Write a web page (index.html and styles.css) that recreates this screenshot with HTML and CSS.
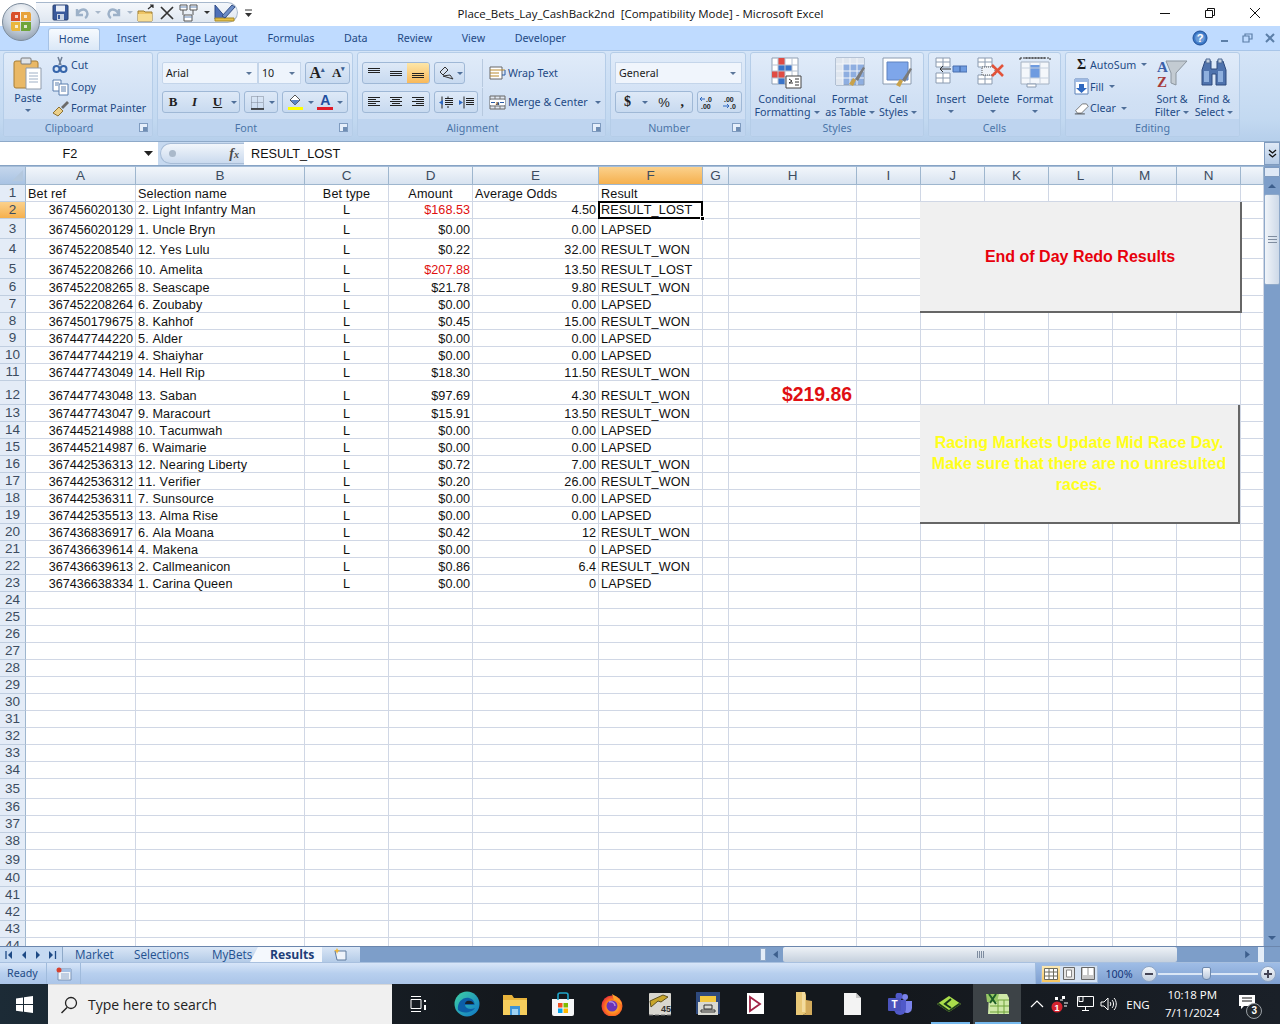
FILE: index.html
```html
<!DOCTYPE html>
<html lang="en">
<head>
<meta charset="utf-8">
<title>Place_Bets_Lay_CashBack2nd [Compatibility Mode] - Microsoft Excel</title>
<link rel="stylesheet" href="styles.css">
</head>
<body>
<div class="app">

<!-- Office orb -->
<div class="orb">
  <svg width="40" height="40" viewBox="0 0 40 40">
    <defs><radialGradient id="og" cx=".5" cy=".25" r=".8"><stop offset="0" stop-color="#fdfdfd"/><stop offset=".55" stop-color="#c9d3df"/><stop offset="1" stop-color="#8c9bab"/></radialGradient></defs>
    <circle cx="20" cy="20" r="18.5" fill="url(#og)" stroke="#7d8c9c"/>
    <path d="M11 10h8v9h-9v-7z" fill="#d9502a"/><path d="M20 10h9l1 2v7h-10z" fill="#e8a33a"/>
    <path d="M10 20h9v9h-8l-1-2z" fill="#e9b73e"/><path d="M20 20h10v7l-1 2h-9z" fill="#6fa53a"/>
    <path d="M14 13h3v3h-3zM23 13h3v3h-3zM14 23h3v3h-3zM23 23h3v3h-3z" fill="#fff" opacity=".75"/>
  </svg>
</div>

<!-- Title bar -->
<header class="titlebar">
  <div class="qat-wrap">
    <div class="qat">
      <svg width="17" height="17" viewBox="0 0 17 17"><rect x="1" y="1" width="15" height="15" rx="1" fill="#3a5a9c" stroke="#28406f"/><rect x="4" y="1.5" width="9" height="6" fill="#e9eef7"/><rect x="5" y="10" width="7" height="6" fill="#c9d3e3"/><rect x="6" y="11" width="2" height="4" fill="#3a5a9c"/></svg>
      <svg width="18" height="17" viewBox="0 0 18 17"><path d="M4 5v6h6M4 11C6 5 12 4 14 8c1 2 0 5-2 6" fill="none" stroke="#9db1c8" stroke-width="2.4"/></svg>
      <span class="mini-caret dim"></span>
      <svg width="18" height="17" viewBox="0 0 18 17"><path d="M14 5v6H8M14 11C12 5 6 4 4 8c-1 2 0 5 2 6" fill="none" stroke="#9db1c8" stroke-width="2.4"/></svg>
      <span class="mini-caret dim"></span>
      <svg width="18" height="18" viewBox="0 0 18 18"><path d="M1 7h6l1 1h7v9H1z" fill="#eec566" stroke="#9d7c2f"/><path d="M1 10h14v7H1z" fill="#f7dd93"/><path d="M11 5l5-4M13 1h3v3" fill="none" stroke="#2b2b2b" stroke-width="1.2"/></svg>
      <svg width="16" height="16" viewBox="0 0 16 16"><path d="M2 2l12 12M14 2L2 14" stroke="#333" stroke-width="1.7"/></svg>
      <svg width="21" height="18" viewBox="0 0 21 18"><path d="M1 1h7v5H1zM11 1h7v5h-7zM5 11h8v6H5z" fill="#fff" stroke="#555"/><path d="M1 3h7M11 3h7M5 13h8" stroke="#6788b8"/><path d="M4 6v5M14 6v5" stroke="#555"/></svg>
      <span class="mini-caret"></span>
      <svg width="22" height="20" viewBox="0 0 22 20"><path d="M1 2l12 14H1z" fill="#4d6fb8" stroke="#2c4a86"/><path d="M1 15h19v3H1z" fill="#e8c147" stroke="#a78a2b"/><path d="M8 13L18 2l3 2-10 11z" fill="#6d8ec7" stroke="#354f85"/></svg>
    </div>
    <svg class="qat-more" width="9" height="9" viewBox="0 0 9 9"><path d="M1 1h7" stroke="#333"/><path d="M1 4h7L4.500 8z" fill="#333"/></svg>
  </div>
  <div class="doc-title">Place_Bets_Lay_CashBack2nd&nbsp; [Compatibility Mode] - Microsoft Excel</div>
  <div class="win-btns">
    <svg width="12" height="12" viewBox="0 0 12 12"><path d="M1 6.500h10" stroke="#111"/></svg>
    <svg width="12" height="12" viewBox="0 0 12 12"><path d="M1.500 3.500h7v7h-7zM3.500 3.500v-2h7v7h-2" fill="none" stroke="#111"/></svg>
    <svg width="12" height="12" viewBox="0 0 12 12"><path d="M1 1l10 10M11 1L1 11" stroke="#111"/></svg>
  </div>
</header>

<!-- Ribbon tabs -->
<nav class="tabs">
  <div class="tab active">Home</div>
  <div class="tab">Insert</div>
  <div class="tab">Page Layout</div>
  <div class="tab">Formulas</div>
  <div class="tab">Data</div>
  <div class="tab">Review</div>
  <div class="tab">View</div>
  <div class="tab">Developer</div>
  <div class="wb-btns">
    <svg width="16" height="16" viewBox="0 0 16 16"><circle cx="8" cy="8" r="7" fill="#3a78c8" stroke="#1f4f97"/><circle cx="8" cy="8" r="4.800" fill="#fff" opacity=".25"/><text x="8" y="12" class="help-q">?</text></svg>
    <svg width="10" height="10" viewBox="0 0 10 10"><path d="M1 8h7" stroke="#5c7fa8" stroke-width="2"/></svg>
    <svg width="11" height="10" viewBox="0 0 11 10"><path d="M1 3h6v6H1zM3 3V1h7v5H7" fill="none" stroke="#5c7fa8" stroke-width="1.200"/></svg>
    <svg width="10" height="10" viewBox="0 0 10 10"><path d="M1 1l8 8M9 1L1 9" stroke="#5c7fa8" stroke-width="2"/></svg>
  </div>
</nav>

<!-- Ribbon -->
<section class="ribbon">

  <div class="grp g-clip">
    <div class="grp-body">
      <div class="big b-paste">
        <svg width="30" height="33" viewBox="0 0 30 33"><rect x="1" y="4" width="24" height="27" rx="2" fill="#e9b866" stroke="#a67c34"/><rect x="8" y="1" width="10" height="6" rx="1" fill="#dfe3e8" stroke="#7a7a7a"/><path d="M13 11h15v21H13z" fill="#fff" stroke="#8f9bab"/><path d="M16 16h9M16 19h9M16 22h9M16 25h9" stroke="#9fb0c6"/></svg>
        <span class="big-t">Paste</span><span class="caret"></span>
      </div>
      <div class="small-col">
        <div class="sm"><svg width="18" height="18" viewBox="0 0 18 18"><path d="M6 1l3 8M10 1L7 9" stroke="#6f7f96" stroke-width="1.500"/><circle cx="4.500" cy="13" r="3" fill="none" stroke="#3766ab" stroke-width="2"/><circle cx="11.500" cy="13" r="3" fill="none" stroke="#3766ab" stroke-width="2"/></svg><span>Cut</span></div>
        <div class="sm"><svg width="18" height="18" viewBox="0 0 18 18"><path d="M1 2h8v11H1z" fill="#fff" stroke="#5b7fae"/><path d="M7 6h9v11H7z" fill="#fff" stroke="#5b7fae"/><path d="M3 5h4M3 7h3M9 9h5M9 11h5M9 13h5" stroke="#5b7fae"/></svg><span>Copy</span></div>
        <div class="sm"><svg width="18" height="18" viewBox="0 0 18 18"><path d="M1 14l6-6 4 4-5 5z" fill="#ecd089" stroke="#8c7132"/><path d="M9 8l6-6 2 2-6 6z" fill="#6b6b6b"/></svg><span>Format Painter</span></div>
      </div>
    </div>
    <div class="grp-lab">Clipboard<i class="launch"></i></div>
  </div>

  <div class="grp g-font">
    <div class="grp-body rows">
      <div class="rw">
        <div class="combo c-font">Arial<span class="caret"></span></div>
        <div class="combo c-size">10<span class="caret"></span></div>
        <div class="btns c-grow">
          <b class="fb big-a">A<sup>▴</sup></b><b class="fb small-a">A<sup>▾</sup></b>
        </div>
      </div>
      <div class="rw">
        <div class="btns c-biu">
          <b class="fb w-b">B</b><em class="fb w-i">I</em><u class="fb w-u">U</u><span class="caret"></span>
        </div>
        <div class="btns c-bord">
          <svg width="15" height="15" viewBox="0 0 15 15"><path d="M1.500 1.500h12v12h-12zM7.500 1.500v12M1.500 7.500h12" fill="none" stroke="#7c8797" stroke-dasharray="1 1"/><path d="M1 14h13" stroke="#222" stroke-width="1.500"/></svg><span class="caret"></span>
        </div>
        <div class="btns c-col">
          <svg width="17" height="18" viewBox="0 0 17 18"><path d="M3 7l5-5 5 5-5 5z" fill="#fff" stroke="#555"/><path d="M3.500 7h9l-4.500 5z" fill="#5b84c4"/><path d="M1 14h15v3H1z" fill="#ffff00"/></svg><span class="caret"></span>
          <span class="a-col">A</span><span class="caret"></span>
        </div>
      </div>
    </div>
    <div class="grp-lab">Font<i class="launch"></i></div>
  </div>

  <div class="grp g-align">
    <div class="grp-body rows">
      <div class="rw">
        <div class="btns al3">
          <span class="ic"><svg width="14" height="12" viewBox="0 0 14 12"><path d="M1 1.500h12M1 3.500h12M1 5.500h12" stroke="#222"/></svg></span>
          <span class="ic"><svg width="14" height="12" viewBox="0 0 14 12"><path d="M1 4.500h12M1 6.500h12M1 8.500h12" stroke="#222"/></svg></span>
          <span class="ic on"><svg width="14" height="12" viewBox="0 0 14 12"><path d="M1 6.500h12M1 8.500h12M1 10.500h12" stroke="#222"/></svg></span>
        </div>
        <div class="btns orient"><svg width="18" height="15" viewBox="0 0 18 15"><path d="M2 6l5-5 3 3-5 5zM5 10l10 3-3-4z" fill="#d8e2ef" stroke="#333"/></svg><span class="caret"></span></div>
        <div class="vsep"></div>
        <div class="sm wrap"><svg width="17" height="14" viewBox="0 0 17 14"><path d="M1 1h12v12H1z" fill="#fff" stroke="#666"/><path d="M1 4h15M1 7h9M1 10h9" stroke="#b98a2f"/><path d="M16 4v5h-3" fill="none" stroke="#2c5ca5"/></svg><span>Wrap Text</span></div>
      </div>
      <div class="rw">
        <div class="btns al3">
          <span class="ic"><svg width="14" height="12" viewBox="0 0 14 12"><path d="M1 1.500h12M1 3.500h8M1 5.500h12M1 7.500h8M1 9.500h12" stroke="#222"/></svg></span>
          <span class="ic"><svg width="14" height="12" viewBox="0 0 14 12"><path d="M1 1.500h12M3 3.500h8M1 5.500h12M3 7.500h8M1 9.500h12" stroke="#222"/></svg></span>
          <span class="ic"><svg width="14" height="12" viewBox="0 0 14 12"><path d="M1 1.500h12M5 3.500h8M1 5.500h12M5 7.500h8M1 9.500h12" stroke="#222"/></svg></span>
        </div>
        <div class="btns indents">
          <span class="ic2"><svg width="16" height="13" viewBox="0 0 16 13"><path d="M7 2.500h8M7 4.500h8M7 6.500h8M7 8.500h8M4 .5v12M10 .5v2M10 10v2" stroke="#222"/><path d="M5 4L1 6.500 5 9z" fill="#2f68c0"/></svg></span>
          <span class="ic2"><svg width="16" height="13" viewBox="0 0 16 13"><path d="M7 2.500h8M7 4.500h8M7 6.500h8M7 8.500h8M5 .5v12" stroke="#222"/><path d="M0 4l4 2.500L0 9z" fill="#2f68c0"/></svg></span>
        </div>
        <div class="vsep"></div>
        <div class="sm merge"><svg width="17" height="15" viewBox="0 0 17 15"><path d="M1 1h15v13H1z" fill="#dfe6f0" stroke="#666"/><path d="M1 4h15M1 11h15M6 1v3M11 1v3M6 11v3M11 11v3" stroke="#777"/><path d="M1 5h15v5H1z" fill="#fff"/><path d="M2 7.500h4M15 7.500h-4" stroke="#2c5ca5"/><text x="8.500" y="10" class="merge-a">a</text></svg><span>Merge &amp; Center</span><span class="caret"></span></div>
      </div>
    </div>
    <div class="grp-lab">Alignment<i class="launch"></i></div>
  </div>

  <div class="grp g-num">
    <div class="grp-body rows">
      <div class="rw"><div class="combo c-gen">General<span class="caret"></span></div></div>
      <div class="rw">
        <div class="btns c-fmt"><b class="dollar">$</b><span class="caret"></span><span class="pct">%</span><b class="comma">,</b></div>
        <div class="btns c-dec">
          <svg width="19" height="15" viewBox="0 0 19 15"><text x="7" y="7" class="dec">.0</text><text x="2" y="14" class="dec">.00</text><path d="M6 4H1M3 2L1 4l2 2" fill="none" stroke="#2f68c0"/></svg>
          <svg width="19" height="15" viewBox="0 0 19 15"><text x="3" y="7" class="dec">.00</text><text x="9" y="14" class="dec">.0</text><path d="M2 11h6M6 9l2 2-2 2" fill="none" stroke="#2f68c0"/></svg>
        </div>
      </div>
    </div>
    <div class="grp-lab">Number<i class="launch"></i></div>
  </div>

  <div class="grp g-styles">
    <div class="grp-body big-row">
      <div class="big b-cond">
        <svg width="32" height="32" viewBox="0 0 32 32"><path d="M1 1h26v26H1z" fill="#fff" stroke="#8f9fb3"/><path d="M7 1h7v7H7zM7 14h7v7H7zM1 14h6v7H1z" fill="#e04b43"/><path d="M7 8h14v6H7zM7 21h7v6H7z" fill="#3a74c9"/><path d="M1 8h26M1 14h26M1 21h26M7 1v26M14 1v26M21 1v26" stroke="#b6c2d2"/><path d="M15 19h15v12H15z" fill="#fff" stroke="#444"/><path d="M18 22l3 2-3 2h4M24 22h4M24 25h4M24 28h4" fill="none" stroke="#333"/></svg>
        <span class="big-t">Conditional<br>Formatting<i class="caret in"></i></span>
      </div>
      <div class="big b-tab">
        <svg width="32" height="32" viewBox="0 0 32 32"><path d="M2 1h28v27H2z" fill="#8eaee0" stroke="#8b9bb0"/><path d="M2 1h28v6H2zM2 7h7v21H2z" fill="#dfe6ef"/><path d="M2 7h28M2 14h28M2 21h28M9 1v27M16 1v27M23 1v27" stroke="#f3f6fa"/><path d="M15 27l4-6 3 2-3 6z" fill="#c9a24a"/><path d="M21 22l8-12 2 1-7 13z" fill="#7b7b7b"/></svg>
        <span class="big-t">Format<br>as Table<i class="caret in"></i></span>
      </div>
      <div class="big b-cell">
        <svg width="32" height="32" viewBox="0 0 32 32"><path d="M1 1h28v26H1z" fill="#fff" stroke="#8b9bb0"/><path d="M5 5h21v18H5z" fill="#7ea6ea" stroke="#5f82c0"/><path d="M14 28l4-6 3 2-3 6z" fill="#c9a24a"/><path d="M20 23l8-12 2 1-7 13z" fill="#7b7b7b"/></svg>
        <span class="big-t">Cell<br>Styles<i class="caret in"></i></span>
      </div>
    </div>
    <div class="grp-lab plain">Styles</div>
  </div>

  <div class="grp g-cells">
    <div class="grp-body big-row">
      <div class="big b-c">
        <svg width="32" height="32" viewBox="0 0 32 32"><path d="M1 1h14v9H1zM1 16h14v10H1zM8 16v10M1 21h14M8 1v9M1 5h14" fill="#fff" stroke="#8b9bb0"/><path d="M18 9h7v6h-7zM25 9h7v6h-7z" fill="#6e9be0" stroke="#486fae"/><path d="M16 12H5M8 9l-3 3 3 3" fill="none" stroke="#333"/></svg>
        <span class="big-t">Insert</span><span class="caret"></span>
      </div>
      <div class="big b-c">
        <svg width="32" height="32" viewBox="0 0 32 32"><path d="M1 1h14v9H1zM1 18h14v9H1zM8 18v9M1 22h14M8 1v9M1 5h14" fill="#fff" stroke="#8b9bb0"/><path d="M5 10h13v8H5z" fill="#eef2f8" stroke="#555" stroke-dasharray="1 1"/><path d="M15 8l11 11M26 8L15 19" stroke="#e2533a" stroke-width="2.600"/></svg>
        <span class="big-t">Delete</span><span class="caret"></span>
      </div>
      <div class="big b-c">
        <svg width="32" height="32" viewBox="0 0 32 32"><path d="M1 1h30M1 1v3M31 1v3M6 1h20" stroke="#333" stroke-dasharray="2 1"/><path d="M2 5h28v22H2z" fill="#f4f7fb" stroke="#a4b1c2"/><path d="M11 8h10v13H11z" fill="#6e9be0"/><path d="M2 11h28M2 21h28M11 5v22M21 5v22" stroke="#c5d0de"/><path d="M8 27h9v3H8z" fill="#fff" stroke="#8b9bb0"/></svg>
        <span class="big-t">Format</span><span class="caret"></span>
      </div>
    </div>
    <div class="grp-lab plain">Cells</div>
  </div>

  <div class="grp g-edit">
    <div class="grp-body">
      <div class="small-col ed">
        <div class="sm"><b class="sigma">Σ</b><span>AutoSum</span><span class="caret"></span></div>
        <div class="sm"><svg width="15" height="17" viewBox="0 0 15 17"><path d="M1 1h13v15H1z" fill="#fff" stroke="#5f82b8"/><path d="M1 1h13v3H1z" fill="#9db9e3"/><path d="M5 6h5v4h3l-5.500 5L2 10h3z" fill="#2f68c0"/></svg><span>Fill</span><span class="caret"></span></div>
        <div class="sm"><svg width="18" height="15" viewBox="0 0 18 15"><path d="M2 10l8-8h5l2 3-8 8H4z" fill="#fff" stroke="#666"/><path d="M1 14h12" stroke="#333"/></svg><span>Clear</span><span class="caret"></span></div>
      </div>
      <div class="big b-sort">
        <svg width="32" height="32" viewBox="0 0 32 32"><path d="M10 4h21L20 16v12l-5-2V16z" fill="#c3cbd2" stroke="#8c969f"/><text x="1" y="15" class="az-a">A</text><text x="1" y="30" class="az-z">Z</text></svg>
        <span class="big-t">Sort &amp;<br>Filter<i class="caret in"></i></span>
      </div>
      <div class="big b-find">
        <svg width="32" height="32" viewBox="0 0 32 32"><path d="M4 13l3-9h6v8h6V4h6l3 9v15H18V17h-4v11H4z" fill="#4f73ad" stroke="#2e4a7d"/><path d="M8 2h4v4H8zM20 2h4v4h-4z" fill="#c3cfdf" stroke="#4f6a94"/><path d="M6 14h5v11H6zM20 14h5v11h-5z" fill="#8fb0de"/></svg>
        <span class="big-t">Find &amp;<br>Select<i class="caret in"></i></span>
      </div>
    </div>
    <div class="grp-lab plain">Editing</div>
  </div>
</section>

<!-- Formula bar -->
<div class="fbar">
  <div class="namebox"><span class="nm">F2</span><svg width="9" height="5" viewBox="0 0 9 5"><path d="M0 0h9L4.500 5z" fill="#222"/></svg></div>
  <div class="fx-pill"><span class="dot"></span><i class="fx">f<small>x</small></i></div>
  <div class="fval">RESULT_LOST</div>
  <div class="fexp"><svg width="9" height="10" viewBox="0 0 9 10"><path d="M1 1l3.500 3L8 1M1 5l3.500 3L8 5" fill="none" stroke="#111" stroke-width="1.300"/></svg></div>
</div>

<!-- Sheet -->
<main class="sheetarea">
  <div class="gridwrap">
    <table class="grid">
      <colgroup><col class="c0"><col class="ca"><col class="cb"><col class="cc"><col class="cd"><col class="ce"><col class="cf"><col class="cg"><col class="ch"><col class="cn"><col class="cn"><col class="cn"><col class="cn"><col class="cn"><col class="cn"><col class="co"></colgroup>
      <thead><tr><th class="corner"><svg width="11" height="11" viewBox="0 0 11 11"><path d="M11 0v11H0z" fill="#b4c8de"/></svg></th><th>A</th><th>B</th><th>C</th><th>D</th><th>E</th><th class="hl">F</th><th>G</th><th>H</th><th>I</th><th>J</th><th>K</th><th>L</th><th>M</th><th>N</th><th></th></tr></thead>
      <tbody>
<tr><th>1</th><td>Bet ref</td><td>Selection name</td><td class="c">Bet type</td><td class="c">Amount</td><td>Average Odds</td><td>Result</td><td></td><td></td><td></td><td></td><td></td><td></td><td></td><td></td><td></td></tr>
<tr class="up"><th class="hl">2</th><td class="r">367456020130</td><td>2. Light Infantry Man</td><td class="c">L</td><td class="r red">$168.53</td><td class="r">4.50</td><td class="sel">RESULT_LOST</td><td></td><td></td><td></td><td></td><td></td><td></td><td></td><td></td><td></td></tr>
<tr class="h20 up"><th>3</th><td class="r">367456020129</td><td>1. Uncle Bryn</td><td class="c">L</td><td class="r">$0.00</td><td class="r">0.00</td><td>LAPSED</td><td></td><td></td><td></td><td></td><td></td><td></td><td></td><td></td><td></td></tr>
<tr class="h20 up"><th>4</th><td class="r">367452208540</td><td>12. Yes Lulu</td><td class="c">L</td><td class="r">$0.22</td><td class="r">32.00</td><td>RESULT_WON</td><td></td><td></td><td></td><td></td><td></td><td></td><td></td><td></td><td></td></tr>
<tr class="h20 up"><th>5</th><td class="r">367452208266</td><td>10. Amelita</td><td class="c">L</td><td class="r red">$207.88</td><td class="r">13.50</td><td>RESULT_LOST</td><td></td><td></td><td></td><td></td><td></td><td></td><td></td><td></td><td></td></tr>
<tr><th>6</th><td class="r">367452208265</td><td>8. Seascape</td><td class="c">L</td><td class="r">$21.78</td><td class="r">9.80</td><td>RESULT_WON</td><td></td><td></td><td></td><td></td><td></td><td></td><td></td><td></td><td></td></tr>
<tr><th>7</th><td class="r">367452208264</td><td>6. Zoubaby</td><td class="c">L</td><td class="r">$0.00</td><td class="r">0.00</td><td>LAPSED</td><td></td><td></td><td></td><td></td><td></td><td></td><td></td><td></td><td></td></tr>
<tr><th>8</th><td class="r">367450179675</td><td>8. Kahhof</td><td class="c">L</td><td class="r">$0.45</td><td class="r">15.00</td><td>RESULT_WON</td><td></td><td></td><td></td><td></td><td></td><td></td><td></td><td></td><td></td></tr>
<tr><th>9</th><td class="r">367447744220</td><td>5. Alder</td><td class="c">L</td><td class="r">$0.00</td><td class="r">0.00</td><td>LAPSED</td><td></td><td></td><td></td><td></td><td></td><td></td><td></td><td></td><td></td></tr>
<tr><th>10</th><td class="r">367447744219</td><td>4. Shaiyhar</td><td class="c">L</td><td class="r">$0.00</td><td class="r">0.00</td><td>LAPSED</td><td></td><td></td><td></td><td></td><td></td><td></td><td></td><td></td><td></td></tr>
<tr><th>11</th><td class="r">367447743049</td><td>14. Hell Rip</td><td class="c">L</td><td class="r">$18.30</td><td class="r">11.50</td><td>RESULT_WON</td><td></td><td></td><td></td><td></td><td></td><td></td><td></td><td></td><td></td></tr>
<tr class="h24 up"><th>12</th><td class="r">367447743048</td><td>13. Saban</td><td class="c">L</td><td class="r">$97.69</td><td class="r">4.30</td><td>RESULT_WON</td><td></td><td class="r total">$219.86</td><td></td><td></td><td></td><td></td><td></td><td></td><td></td></tr>
<tr><th>13</th><td class="r">367447743047</td><td>9. Maracourt</td><td class="c">L</td><td class="r">$15.91</td><td class="r">13.50</td><td>RESULT_WON</td><td></td><td></td><td></td><td></td><td></td><td></td><td></td><td></td><td></td></tr>
<tr><th>14</th><td class="r">367445214988</td><td>10. Tacumwah</td><td class="c">L</td><td class="r">$0.00</td><td class="r">0.00</td><td>LAPSED</td><td></td><td></td><td></td><td></td><td></td><td></td><td></td><td></td><td></td></tr>
<tr><th>15</th><td class="r">367445214987</td><td>6. Waimarie</td><td class="c">L</td><td class="r">$0.00</td><td class="r">0.00</td><td>LAPSED</td><td></td><td></td><td></td><td></td><td></td><td></td><td></td><td></td><td></td></tr>
<tr><th>16</th><td class="r">367442536313</td><td>12. Nearing Liberty</td><td class="c">L</td><td class="r">$0.72</td><td class="r">7.00</td><td>RESULT_WON</td><td></td><td></td><td></td><td></td><td></td><td></td><td></td><td></td><td></td></tr>
<tr><th>17</th><td class="r">367442536312</td><td>11. Verifier</td><td class="c">L</td><td class="r">$0.20</td><td class="r">26.00</td><td>RESULT_WON</td><td></td><td></td><td></td><td></td><td></td><td></td><td></td><td></td><td></td></tr>
<tr><th>18</th><td class="r">367442536311</td><td>7. Sunsource</td><td class="c">L</td><td class="r">$0.00</td><td class="r">0.00</td><td>LAPSED</td><td></td><td></td><td></td><td></td><td></td><td></td><td></td><td></td><td></td></tr>
<tr><th>19</th><td class="r">367442535513</td><td>13. Alma Rise</td><td class="c">L</td><td class="r">$0.00</td><td class="r">0.00</td><td>LAPSED</td><td></td><td></td><td></td><td></td><td></td><td></td><td></td><td></td><td></td></tr>
<tr><th>20</th><td class="r">367436836917</td><td>6. Ala Moana</td><td class="c">L</td><td class="r">$0.42</td><td class="r">12</td><td>RESULT_WON</td><td></td><td></td><td></td><td></td><td></td><td></td><td></td><td></td><td></td></tr>
<tr><th>21</th><td class="r">367436639614</td><td>4. Makena</td><td class="c">L</td><td class="r">$0.00</td><td class="r">0</td><td>LAPSED</td><td></td><td></td><td></td><td></td><td></td><td></td><td></td><td></td><td></td></tr>
<tr><th>22</th><td class="r">367436639613</td><td>2. Callmeanicon</td><td class="c">L</td><td class="r">$0.86</td><td class="r">6.4</td><td>RESULT_WON</td><td></td><td></td><td></td><td></td><td></td><td></td><td></td><td></td><td></td></tr>
<tr><th>23</th><td class="r">367436638334</td><td>1. Carina Queen</td><td class="c">L</td><td class="r">$0.00</td><td class="r">0</td><td>LAPSED</td><td></td><td></td><td></td><td></td><td></td><td></td><td></td><td></td><td></td></tr>
<tr><th>24</th><td><td><td><td><td><td><td><td><td><td><td><td><td><td><td><td></tr>
<tr><th>25</th><td><td><td><td><td><td><td><td><td><td><td><td><td><td><td><td></tr>
<tr><th>26</th><td><td><td><td><td><td><td><td><td><td><td><td><td><td><td><td></tr>
<tr><th>27</th><td><td><td><td><td><td><td><td><td><td><td><td><td><td><td><td></tr>
<tr><th>28</th><td><td><td><td><td><td><td><td><td><td><td><td><td><td><td><td></tr>
<tr><th>29</th><td><td><td><td><td><td><td><td><td><td><td><td><td><td><td><td></tr>
<tr><th>30</th><td><td><td><td><td><td><td><td><td><td><td><td><td><td><td><td></tr>
<tr><th>31</th><td><td><td><td><td><td><td><td><td><td><td><td><td><td><td><td></tr>
<tr><th>32</th><td><td><td><td><td><td><td><td><td><td><td><td><td><td><td><td></tr>
<tr><th>33</th><td><td><td><td><td><td><td><td><td><td><td><td><td><td><td><td></tr>
<tr><th>34</th><td><td><td><td><td><td><td><td><td><td><td><td><td><td><td><td></tr>
<tr class="h20"><th>35</th><td><td><td><td><td><td><td><td><td><td><td><td><td><td><td><td></tr>
<tr><th>36</th><td><td><td><td><td><td><td><td><td><td><td><td><td><td><td><td></tr>
<tr><th>37</th><td><td><td><td><td><td><td><td><td><td><td><td><td><td><td><td></tr>
<tr><th>38</th><td><td><td><td><td><td><td><td><td><td><td><td><td><td><td><td></tr>
<tr class="h20"><th>39</th><td><td><td><td><td><td><td><td><td><td><td><td><td><td><td><td></tr>
<tr><th>40</th><td><td><td><td><td><td><td><td><td><td><td><td><td><td><td><td></tr>
<tr><th>41</th><td><td><td><td><td><td><td><td><td><td><td><td><td><td><td><td></tr>
<tr><th>42</th><td><td><td><td><td><td><td><td><td><td><td><td><td><td><td><td></tr>
<tr><th>43</th><td><td><td><td><td><td><td><td><td><td><td><td><td><td><td><td></tr>
<tr><th>44</th><td><td><td><td><td><td><td><td><td><td><td><td><td><td><td><td></tr>
      </tbody>
    </table>
    <div class="shape s-red">End of Day Redo Results</div>
    <div class="shape s-yel">Racing Markets Update Mid Race Day. Make sure that there are no unresulted races.</div>
  </div>
  <div class="vscroll">
    <div class="vsplit"></div>
    <div class="varrow up"></div>
    <div class="vthumb"><i></i></div>
    <div class="vspace"></div>
    <div class="varrow down"></div>
  </div>
</main>

<!-- Sheet tabs + h scroll -->
<div class="sheetbar">
  <div class="nav">
    <svg width="62" height="16" viewBox="0 0 62 16"><path d="M6 4v8" stroke="#1e4a85" stroke-width="1.300"/><path d="M12 4L8 8l4 4zM26 4l-4 4 4 4zM36 4l4 4-4 4zM49 4l4 4-4 4z" fill="#1e4a85"/><path d="M55.500 4v8" stroke="#1e4a85" stroke-width="1.300"/></svg>
  </div>
  <div class="st first">Market</div>
  <div class="st s-sel">Selections</div>
  <div class="st s-my">MyBets</div>
  <div class="st on">Results</div>
  <div class="st newtab"><svg width="15" height="13" viewBox="0 0 15 13"><path d="M2 3h11v9H4z" fill="#eef3fa" stroke="#5e7a9e"/><path d="M4 0l1 2 2 .5-2 1L4 6 3 3.500l-2-1 2-.5z" fill="#f0b73a"/></svg></div>
  <div class="st-rest"></div>
  <div class="hsplit"></div>
  <div class="hscroll">
    <svg class="harr" width="12" height="16" viewBox="0 0 12 16"><path d="M8 4L3 8l5 4z" fill="#3d5f8d"/></svg>
    <div class="hthumb"><i></i></div>
    <div class="hspace"></div>
    <svg class="harr" width="12" height="16" viewBox="0 0 12 16"><path d="M3 4l5 4-5 4z" fill="#3d5f8d"/></svg>
    <div class="hsplit2"></div>
  </div>
</div>

<!-- Status bar -->
<footer class="status">
  <div class="s-ready">Ready</div>
  <div class="s-ic"><svg width="16" height="14" viewBox="0 0 16 14"><path d="M2 2h13v11H2z" fill="#f1f5fb" stroke="#7d94b5"/><path d="M2 2h13v3H2z" fill="#a5bfe3"/><path d="M5 7h8M5 9h8M5 11h8" stroke="#8ea6c8"/><circle cx="3" cy="3" r="2.500" fill="#d7412e"/></svg></div>
  <div class="s-fill"></div>
  <div class="s-right">
    <div class="views">
      <span class="v on"><svg width="14" height="12" viewBox="0 0 14 12"><path d="M.5.500h13v11H.5zM.5 4h13M.5 8h13M5 .5v11M9.500.5v11" fill="#fff" stroke="#6c6c5e"/></svg></span>
      <span class="v"><svg width="12" height="13" viewBox="0 0 12 13"><path d="M.5.500h11v12H.5z" fill="#e5e5e5" stroke="#666"/><path d="M3.500 3h5v7h-5z" fill="#fff" stroke="#888"/></svg></span>
      <span class="v"><svg width="14" height="13" viewBox="0 0 14 13"><path d="M.5.500h13v12H.5z" fill="#c9c9c9" stroke="#666"/><path d="M2 1h4v7H2zM8 1h4v7H8z" fill="#fff"/></svg></span>
    </div>
    <div class="zoomv">100%</div>
    <div class="zbtn"><svg width="10" height="10" viewBox="0 0 10 10"><path d="M1 5h8" stroke="#445" stroke-width="2"/></svg></div>
    <div class="zslider"><i class="zthumb"></i></div>
    <div class="zbtn"><svg width="10" height="10" viewBox="0 0 10 10"><path d="M1 5h8M5 1v8" stroke="#445" stroke-width="2"/></svg></div>
  </div>
</footer>

<!-- Taskbar -->
<footer class="taskbar">
  <div class="startbtn"><svg width="17" height="17" viewBox="0 0 17 17"><path d="M0 2.400l7-1V8H0zM8 1.300L17 0v8H8zM0 9h7v6.700l-7-1zM8 9h9v8l-9-1.300z" fill="#fff"/></svg></div>
  <div class="search"><svg width="18" height="18" viewBox="0 0 18 18"><circle cx="11" cy="7" r="5.500" fill="none" stroke="#222" stroke-width="1.300"/><path d="M7 11.500L1.500 17" stroke="#222" stroke-width="1.500"/></svg><span>Type here to search</span></div>
  <div class="tb tb-first"><svg width="17" height="16" viewBox="0 0 17 16"><path d="M2 .5h10M2 15.500h10M2 3.500h10v9H2z" fill="none" stroke="#fff"/><path d="M15 4h2v2h-2zM15 9h2v5h-2z" fill="#fff"/></svg></div>
  <div class="tb"><svg width="26" height="26" viewBox="0 0 26 26"><defs><linearGradient id="ed" x1="0" y1="0" x2="1" y2="1"><stop offset="0" stop-color="#3fd2a4"/><stop offset="1" stop-color="#0f74c9"/></linearGradient></defs><circle cx="13" cy="13" r="12.500" fill="url(#ed)"/><path d="M4 19C3 11 9 6 15 7c4 .8 6 4 5.500 7H11c.5 4 6 5 10 3-3 5-13 6-17 2z" fill="#0c5ea8"/><path d="M13 10c3-1 6 0 7 3h-9c0-1.500 1-2.500 2-3z" fill="#16202b"/></svg></div>
  <div class="tb"><svg width="24" height="21" viewBox="0 0 24 21"><path d="M0 1h9l2 3h13v3H0z" fill="#e8b33b"/><path d="M0 6h24v15H0z" fill="#f5cd5c"/><path d="M7 12h10v9H7z" fill="#3f95d8"/><path d="M9 15h6v6H9z" fill="#9fd2f2"/></svg></div>
  <div class="tb"><svg width="24" height="24" viewBox="0 0 24 24"><path d="M1 7h22v15a2 2 0 0 1-2 2H3a2 2 0 0 1-2-2z" fill="#f5f6f7"/><path d="M7 8V3a2 2 0 0 1 2-2h6a2 2 0 0 1 2 2v5" fill="none" stroke="#20a5c9" stroke-width="1.600"/><path d="M7 11h4.500v4.500H7z" fill="#f25022"/><path d="M12.500 11H17v4.500h-4.500z" fill="#7fba00"/><path d="M7 16.500h4.500V21H7z" fill="#00a4ef"/><path d="M12.500 16.500H17V21h-4.500z" fill="#ffb900"/></svg></div>
  <div class="tb"><svg width="24" height="24" viewBox="0 0 24 24"><defs><radialGradient id="ff" cx=".55" cy=".55" r=".6"><stop offset="0" stop-color="#ffd93a"/><stop offset=".6" stop-color="#ff7a1f"/><stop offset="1" stop-color="#e5263f"/></radialGradient></defs><circle cx="12" cy="14" r="10.500" fill="url(#ff)"/><path d="M12 2c6 3 9 6 10 11-3-3-6-5-8-5z" fill="#ffa22b"/><circle cx="12" cy="14" r="5.500" fill="#6b34b8"/><path d="M9 10c3-1 6 1 6 4" fill="none" stroke="#b28bdf" stroke-width="1.500"/></svg></div>
  <div class="tb"><svg width="24" height="24" viewBox="0 0 24 24"><rect x="1" y="1" width="22" height="22" rx="1" fill="#d8d6cf"/><path d="M2 9l13-6 5 2-7 5-3-1-7 6z" fill="#c9a62a" stroke="#5d5020"/><text x="13" y="20" class="ico-t">45</text><path d="M1 23h22" stroke="#777" stroke-dasharray="4 2"/></svg></div>
  <div class="tb"><svg width="24" height="24" viewBox="0 0 24 24"><path d="M0 0h24v22H0z" fill="#3a5fa8" opacity=".7"/><path d="M4 4h16v7H4z" fill="#f2c73f"/><path d="M2 10h20v13H2z" fill="#d9d9d2"/><path d="M8 13h8v4H8zM5 18h14v2H5z" fill="none" stroke="#333"/></svg></div>
  <div class="tb"><svg width="18" height="22" viewBox="0 0 18 22"><path d="M0 0h17v21H0z" fill="#fff"/><path d="M3 4l10 7-10 7z" fill="none" stroke="#a12345" stroke-width="1.800"/></svg></div>
  <div class="tb"><svg width="18" height="24" viewBox="0 0 18 24"><path d="M1 0h9l1 3v18l-3 2H1z" fill="#e9c877"/><path d="M11 8l6 1v14H8l3-2z" fill="#d3ab5c"/><path d="M7 0h3v20H7z" fill="#f3dc9f"/></svg></div>
  <div class="tb"><svg width="17" height="22" viewBox="0 0 17 22"><path d="M0 0h12l5 5v17H0z" fill="#f3f3f3"/><path d="M12 0v5h5z" fill="#c8c8c8"/></svg></div>
  <div class="tb"><svg width="25" height="22" viewBox="0 0 25 22"><circle cx="17" cy="4" r="3" fill="#7b83eb"/><path d="M13 8h11v7a5 5 0 0 1-8 4z" fill="#7b83eb"/><circle cx="11" cy="3" r="3.500" fill="#5059c9"/><path d="M6 7h12v9a6 6 0 0 1-12 0z" fill="#5059c9"/><rect x="0" y="5" width="13" height="13" rx="1" fill="#4b53bc"/><text x="6.500" y="15" class="ico-t2">T</text></svg></div>
  <div class="tb under"><svg width="24" height="16" viewBox="0 0 24 16"><path d="M12 0l12 8-12 8L0 8z" fill="#a9dd4b"/><path d="M12 16L0 8l2-1 10 7 10-7 2 1z" fill="#1f3c1c"/><path d="M14 3L8 8l6 4" fill="none" stroke="#14351a" stroke-width="2"/></svg></div>
  <div class="tb under active"><svg width="24" height="24" viewBox="0 0 24 24"><path d="M4 2h18l2 4v16H3z" fill="#cfe8a8"/><path d="M5 8h19M5 14h19M5 20h19M13 8v14M19 8v14" stroke="#6fa23a"/><path d="M1 2h13l-2 8H2z" fill="#97c765"/><path d="M4 2l7 10M11 2L5 11" stroke="#1d5c27" stroke-width="2"/></svg></div>
  <div class="tray">
    <svg class="t-up" width="14" height="8" viewBox="0 0 14 8"><path d="M1 7l6-6 6 6" fill="none" stroke="#fff" stroke-width="1.200"/></svg>
    <svg class="t-net" width="18" height="18" viewBox="0 0 18 18"><path d="M4 2h3v3H4zM11 1h3v3h-3z" fill="#fff"/><circle cx="6" cy="12" r="5.500" fill="#d5242f"/><text x="6" y="16" class="ico-t3">1</text><path d="M9 5h3M13 8h4M13 11h3" stroke="#fff"/></svg>
    <svg class="t-mon" width="17" height="16" viewBox="0 0 17 16"><path d="M.5.500h16v10H.5zM5 14.500h7M8.500 10.500v4" fill="none" stroke="#fff"/><path d="M2 .5h4v5H2z" fill="#1a2028" stroke="#fff"/></svg>
    <svg class="t-vol" width="17" height="14" viewBox="0 0 17 14"><path d="M1 5h3l4-4v12l-4-4H1z" fill="none" stroke="#fff"/><path d="M10 5c1 1 1 3 0 4M12 3c2 2 2 6 0 8M14 1c3 3 3 9 0 12" fill="none" stroke="#fff"/></svg>
    <span class="t-eng">ENG</span>
    <div class="t-clock"><span>10:18 PM</span><span>7/11/2024</span></div>
    <div class="t-note">
      <svg width="17" height="15" viewBox="0 0 17 15"><path d="M0 0h16v11H5l-3 3v-3H0z" fill="#fff"/><path d="M3 3h10M3 6h10" stroke="#111"/></svg>
      <span class="badge">3</span>
    </div>
  </div>
</footer>

</div>
</body>
</html>
```
FILE: styles.css
```css
* { box-sizing: border-box; }
html, body { margin: 0; padding: 0; }
body { font-family: "Noto Sans", "Open Sans", sans-serif; color: #1e395b; overflow: hidden; }
svg { display: block; flex: none; }
.app { width: 1280px; height: 1024px; display: flex; flex-direction: column; position: relative; overflow: hidden; background: #fff; }

/* orb */
.orb { position: absolute; left: 1px; top: 2px; z-index: 5; }

/* title bar */
.titlebar { height: 26px; display: grid; grid-template-columns: 1fr auto 1fr; align-items: center; background: #fff; }
.qat-wrap { display: flex; align-items: center; padding-left: 36px; }
.qat { display: flex; align-items: center; gap: 4px; height: 21px; padding: 0 8px 0 16px; margin-top: -1px; width: 202px;
  background: linear-gradient(#f4f7fb, #dfe7f1); border: 1px solid #a7b8cd; border-left: 0; border-radius: 0 11px 11px 0; }
.qat-more { margin-left: 6px; }
.mini-caret { width: 0; height: 0; border: 3px solid transparent; border-top: 3px solid #333; border-bottom: 0; flex: none; }
.mini-caret.dim { border-top-color: #a9b8ca; }
.doc-title { font-family: "Open Sans", sans-serif; font-size: 11.5px; color: #111; white-space: pre; padding-left: 1px; }
.win-btns { display: flex; justify-content: flex-end; gap: 33px; padding-right: 19px; }

/* tabs */
.tabs { height: 24px; display: flex; align-items: flex-end; padding-left: 48px; background: #bfdbff; font-size: 10.700px; color: #1e4a85; }
.tab { height: 22px; line-height: 20px; padding: 0 14.800px; }
.tab.active { width: 52px; padding: 0; margin-right: 2px; text-align: center; background: linear-gradient(#f6fafe, #dbe8f7); border: 1px solid #a6c2e5; border-bottom: 0; border-radius: 3px 3px 0 0; }
.wb-btns { margin-left: auto; display: flex; align-items: center; gap: 12px; height: 24px; padding-right: 5px; }
.help-q { font: bold 11px "Liberation Sans", sans-serif; fill: #fff; text-anchor: middle; }

/* ribbon */
.ribbon { height: 92px; display: flex; gap: 4px; padding: 1px 2px 4px 3px; background: linear-gradient(#d4e4f7, #c3d9f1 75%, #b6cfeb); border-top: 1px solid #a8c5e8; border-bottom: 1px solid #8ea9c8; font-size: 10.700px; color: #1e4a85; }
.grp { display: flex; flex-direction: column; flex: none; border: 1px solid #b5cde8; border-radius: 3px; background: linear-gradient(#e0ebf9, #d0e0f4 60%, #cbdcf2); overflow: hidden; }
.g-clip { width: 150px; } .g-font { width: 196px; } .g-align { width: 249px; } .g-num { width: 136px; } .g-styles { width: 174px; } .g-cells { width: 133px; } .g-edit { width: 175px; }
.grp-body { flex: 1; display: flex; min-height: 0; }
.grp-lab { height: 17px; line-height: 17px; text-align: center; background: #bed4ef; color: #4b74a8; position: relative; flex: none; padding: 1px 18px 0 0; }
.grp-lab.plain { padding-right: 0; }
.launch { position: absolute; right: 4px; top: 4px; width: 9px; height: 9px; border: 1px solid #7f9bbf; background: #e5eefa; }
.launch::after { content: ""; position: absolute; right: 0; bottom: 0; width: 4px; height: 4px; background: #6f8db3; }

.big { display: flex; flex-direction: column; align-items: center; flex: none; }
.big-t { line-height: 13px; text-align: center; white-space: nowrap; margin-top: 4px; }
.caret { display: inline-block; width: 0; height: 0; border: 3px solid transparent; border-top: 3px solid #4f6f99; border-bottom: 0; flex: none; }
.caret.in { display: inline-block; margin-left: 3px; vertical-align: 2px; }
.big > .caret { margin-top: 4px; }

.b-paste { width: 48px; padding-top: 4px; }
.b-paste .big-t { margin-top: 2px; }
.small-col { display: flex; flex-direction: column; padding-top: 1px; }
.sm { height: 22px; display: flex; align-items: center; gap: 1px; white-space: nowrap; }
.sm svg { width: 18px; }

.rows { flex-direction: column; gap: 7px; padding: 9px 0 0 4px; }
.rw { height: 22px; display: flex; align-items: stretch; gap: 4px; }
.combo { display: flex; align-items: center; justify-content: space-between; padding: 0 5px 0 3px; background: #eef4fc; border: 1px solid #c4d5ea; color: #1b1b1b; }
.combo .caret { border-top-color: #5b7699; }
.c-font { width: 96px; border-radius: 2px 0 0 2px; margin-right: -4px; }
.c-size { width: 43px; }
.btns { display: flex; align-items: center; background: linear-gradient(#dee9f7, #c8daf0); border: 1px solid #9fb8d6; border-radius: 3px; flex: none; }
.c-grow { width: 45px; justify-content: space-around; }
.fb { font-family: "Liberation Serif", serif; color: #1f1f1f; text-align: center; }
.big-a { font-size: 16px; } .small-a { font-size: 13px; }
.fb sup { font-size: 7px; color: #3a5f93; vertical-align: 6px; line-height: 0; font-family: "Liberation Sans", sans-serif; }
.c-biu { width: 78px; font-size: 13px; }
.w-b { font-weight: bold; width: 20px; } .w-i { font-style: italic; font-weight: bold; width: 23px; } .w-u { font-weight: bold; width: 23px; }
.c-biu .caret { margin-left: 2px; }
.c-bord { width: 34px; padding: 0 4px 0 5px; gap: 4px; }
.c-col { width: 66px; padding: 0 4px; gap: 3px; justify-content: space-between; }
.a-col { font: bold 14px/13px "Liberation Sans", sans-serif; color: #1f4f9f; border-bottom: 3px solid #e01c2a; width: 16px; text-align: center; }

.al3 { width: 68px; overflow: hidden; }
.ic { flex: 1; height: 100%; display: flex; align-items: center; justify-content: center; }
.ic.on { background: linear-gradient(#fde6a8, #f9b95a); }
.orient { width: 31px; padding: 0 3px; gap: 1px; margin-right: 13px; }
.indents { width: 44px; }
.ic2 { flex: 1; display: flex; justify-content: center; }
.vsep { width: 1px; background: #b7c9df; margin: -3px 0; }
.wrap, .merge { gap: 2px; margin-left: 2px; }
.wrap svg, .merge svg { width: 17px; }
.merge .caret { margin-left: 5px; }
.merge-a { font: bold 7px "Liberation Serif", serif; fill: #222; text-anchor: middle; }

.c-gen { width: 127px; background: #f0f5fc; }
.c-fmt { width: 78px; padding: 0 8px; justify-content: space-between; }
.dollar { font: bold 14px "Liberation Serif", serif; color: #222; }
.pct { font: 13px "Liberation Sans", sans-serif; color: #222; }
.comma { font: bold 14px "Liberation Serif", serif; color: #222; line-height: 10px; }
.c-dec { width: 45px; justify-content: space-around; }
.dec { font: 7px "Liberation Sans", sans-serif; fill: #222; font-weight: bold; }

.big-row { padding-top: 4px; }
.b-cond { width: 72px; } .b-tab { width: 54px; } .b-cell { width: 42px; }
.b-c { width: 42px; }
.g-cells .big-row { padding-left: 1px; }
.ed { padding-left: 8px; width: 87px; flex: none; }
.ed .sm svg { width: 15px; }
.ed .sm .caret { margin-left: 4px; }
.sigma { font: bold 14px "Liberation Serif", serif; color: #1a1a1a; width: 15px; text-align: center; }
.b-sort { width: 42px; margin-left: -2px; padding-top: 4px; } .b-find { width: 42px; padding-top: 4px; }
.az-a { font: bold 15px "Liberation Serif", serif; fill: #3a5fa8; }
.az-z { font: bold 15px "Liberation Serif", serif; fill: #a63a3a; }

/* formula bar */
.fbar { height: 24px; display: flex; align-items: stretch; background: #c6d9f0; border-bottom: 1px solid #87a3c4; font: 12.700px "Liberation Sans", sans-serif; color: #111; }
.namebox { width: 158px; background: #fff; display: flex; align-items: center; padding: 0 5px 0 0; }
.nm { flex: 1; text-align: center; padding: 0 27px 0 23px; }
.fx-pill { width: 84px; margin: 1px 0 1px 2px; border: 1px solid #a7bcd6; border-right: 0; border-radius: 11px 0 0 11px; background: linear-gradient(#f2f6fb, #cadaee); display: flex; align-items: center; justify-content: space-between; padding: 0 5px 0 8px; }
.dot { width: 7px; height: 7px; border-radius: 50%; background: #aab9ca; }
.fx { font: italic bold 14px "Liberation Serif", serif; color: #4a4a4a; }
.fx small { font-size: 10px; }
.fval { flex: 1; background: #fff; padding-left: 7px; line-height: 24px; }
.fexp { width: 16px; background: linear-gradient(#dfe9f6, #b5cbe6); border: 1px solid #7f9bbf; display: flex; align-items: center; justify-content: center; }

/* sheet */
.sheetarea { height: 780px; display: flex; overflow: hidden; }
.gridwrap { width: 1264px; height: 780px; position: relative; overflow: hidden; }
.grid { width: 1264px; table-layout: fixed; border-collapse: separate; border-spacing: 0; font: 12.650px "Liberation Sans", sans-serif; font-kerning: none; color: #111; }
.c0 { width: 26px; } .ca { width: 110px; } .cb { width: 169px; } .cc { width: 84px; } .cd { width: 84px; } .ce { width: 126px; } .cf { width: 104px; } .cg { width: 26px; } .ch { width: 128px; } .cn { width: 64px; } .co { width: 23px; }
.grid tr { height: 17px; }
.grid tr.h20 { height: 20px; } .grid tr.h24 { height: 24px; }
.grid td { padding: 0 2px; height: inherit; line-height: 14px; vertical-align: bottom; border-right: 1px solid #d0d7e5; border-bottom: 1px solid #d0d7e5; white-space: nowrap; overflow: hidden; letter-spacing: .12px; }
.grid tr.up td { padding-bottom: 1px; }
.grid td.r { text-align: right; letter-spacing: 0; }
.grid td.c { text-align: center; }
.grid td.red { color: #e01010; }
.grid tr.up td.total { color: #e00f12; font: bold 19.400px/20px "Liberation Sans", sans-serif; padding: 0 4px 0 0; }
.grid td.sel { position: relative; overflow: visible; }
.grid td.sel::after { content: ""; position: absolute; left: -1px; top: -1px; right: -1px; bottom: -1px; border: 2px solid #000; }
.grid td.sel::before { content: ""; position: absolute; right: -3px; bottom: -3px; background: #000; border: 1px solid #fff; z-index: 1; box-sizing: content-box; width: 3px; height: 3px; }
.grid th { font: 13.500px/16px "Liberation Sans", sans-serif; padding: 0; color: #3c4c60; text-align: center; overflow: hidden; }
.grid thead tr { height: 19px; }
.grid thead th { vertical-align: middle; background: linear-gradient(#f2f6fb, #d8e3f0); border-top: 1px solid #a5bdd8; border-right: 1px solid #9eb6ce; border-bottom: 1px solid #9eb6ce; }
.grid thead th.corner { background: linear-gradient(#c4d6ec, #a9c3e3); padding-left: 12px; }
.grid thead th.hl { background: linear-gradient(#fbd18c, #f5b04e); }
.grid tbody th { vertical-align: bottom; background: #e4ecf7; border-right: 1px solid #9eb6ce; border-bottom: 1px solid #c0cee0; }
.grid tbody tr.h20 th, .grid tbody tr.h24 th { padding-bottom: 1px; }
.grid tbody th.hl { background: linear-gradient(#fbd18c, #f5b04e); }

.shape { position: absolute; background: #f0f0f0; border-right: 2px solid #666; border-bottom: 2px solid #666; display: flex; align-items: center; justify-content: center; text-align: center; font: bold 16px/21px "Liberation Sans", sans-serif; }
.s-red { left: 920px; top: 36px; width: 322px; height: 111px; color: #e8000c; }
.s-yel { left: 920px; top: 239px; width: 320px; height: 119px; color: #ffff1a; padding: 2px 10px 2px; }

.vscroll { width: 16px; display: flex; flex-direction: column; background: #7d9ec9; }
.vsplit { height: 10px; margin-top: 1px; background: #dfe9f6; border: 1px solid #7f9bbf; border-radius: 1px; }
.varrow { height: 17px; display: flex; align-items: center; justify-content: center; }
.varrow::after { content: ""; border: 4px solid transparent; }
.varrow.up::after { border-bottom: 4px solid #3d5f8d; border-top: 0; }
.varrow.down::after { border-top: 4px solid #3d5f8d; border-bottom: 0; }
.vthumb { height: 91px; background: linear-gradient(90deg, #f0f4f9, #cdd9e8); border: 1px solid #8fa9c9; border-radius: 2px; display: flex; align-items: center; justify-content: center; }
.vthumb i { width: 9px; height: 7px; background: repeating-linear-gradient(#7f8da0 0 1px, transparent 1px 3px); }
.vspace { flex: 1; }

/* sheet tabs */
.sheetbar { height: 16px; display: flex; background: #7d9ec9; font: 11.700px/15px "Open Sans", sans-serif; color: #22508f; border-top: 1px solid #6b86ad; }
.nav { width: 62px; background: #c6daf2; flex: none; }
.st { height: 15px; margin-left: -8px; background: linear-gradient(#d9e6f6, #b4cbe7); clip-path: polygon(8px 0, 100% 0, 100% 100%, 0 100%); flex: none; }
.st.first { margin-left: 0; padding-left: 12px; clip-path: none; width: 60px; border-left: 1px solid #8ea9c8; }
.s-sel { width: 84px; padding-left: 20px; }
.s-my { width: 68px; padding-left: 22px; }
.st.on { width: 72px; padding-left: 20px; font-size: 12.200px; font-weight: bold; background: #f4f8fd; color: #1e3f78; z-index: 1; }
.st.newtab { width: 46px; padding-left: 19px; display: flex; align-items: center; }
.st-rest { flex: 1; }
.hsplit { width: 6px; margin: 1px 0; background: #e4edf8; border: 1px solid #90a9c9; flex: none; }
.hscroll { width: 514px; flex: none; display: flex; align-items: stretch; padding-left: 4px; }
.harr { height: 15px; width: 12px; }
.hthumb { width: 394px; margin-left: 1px; background: linear-gradient(#eef2f7, #c5d0dd); border-radius: 2px; display: flex; align-items: center; justify-content: center; }
.hthumb i { width: 7px; height: 7px; background: repeating-linear-gradient(90deg, #7f8da0 0 1px, transparent 1px 2px); }
.hspace { flex: 1; }
.hsplit2 { width: 6px; margin-left: 4px; margin-right: 16px; background: #e4edf8; }

/* status */
.status { height: 22px; display: flex; align-items: stretch; background: linear-gradient(#d7e5f8, #b7cfee 50%, #abc5e8); border-top: 1px solid #a8c0df; font-size: 10.700px; color: #1e4a85; }
.s-ready { width: 47px; padding-left: 7px; line-height: 20px; border-right: 1px solid #a0bbdc; }
.s-ic { width: 34px; display: flex; align-items: center; justify-content: center; border-right: 1px solid #a0bbdc; }
.s-fill { flex: 1; }
.s-right { width: 245px; background: linear-gradient(#9fbde6, #7e9fd0); display: flex; align-items: center; padding-left: 5px; border-left: 1px solid #a0bbdc; }
.views { display: flex; width: 57px; height: 18px; background: #d4e2f4; border: 1px solid #a4bbd9; flex: none; }
.v { flex: 1; display: flex; align-items: center; justify-content: center; }
.v.on { background: linear-gradient(#fde9b3, #f7c65e); }
.zoomv { width: 42px; flex: none; text-align: center; color: #14367a; }
.zbtn { width: 16px; height: 16px; border-radius: 50%; background: linear-gradient(#f4f7fb, #c3cfdf); border: 1px solid #8fa6c5; display: flex; align-items: center; justify-content: center; margin-left: 1px; flex: none; }
.zslider { width: 100px; height: 2px; background: #dbe7f6; position: relative; flex: none; margin: 0 1px; }
.zthumb { position: absolute; left: 44px; top: -6px; width: 9px; height: 13px; background: linear-gradient(#f4f7fb, #b9c8dc); border: 1px solid #6d88ad; border-radius: 2px 2px 4px 4px; }

/* taskbar */
.taskbar { height: 40px; display: flex; align-items: stretch; background: linear-gradient(90deg, #1c2b36, #14181d 40%, #14181d 70%, #1a2028); color: #fff; }
.startbtn { width: 48px; flex: none; display: flex; align-items: center; justify-content: center; }
.search { width: 344px; flex: none; background: #f0f0f0; color: #222; display: flex; align-items: center; gap: 10px; padding-left: 12px; font: 14px "Open Sans", sans-serif; border-top: 1px solid #d8d8d8; }
.tb { width: 48.200px; display: flex; align-items: center; justify-content: center; flex: none; position: relative; }
.tb.tb-first { width: 51px; }
.tb.under::after { content: ""; position: absolute; left: 6px; right: 3px; bottom: 0; height: 2px; background: #76b9ed; }
.tb.active { background: #3d4347; }
.tb.active::after { left: 2px; right: 0; }
.ico-t { font: bold 9px "Liberation Sans", sans-serif; fill: #333; }
.ico-t2 { font: bold 10px "Liberation Sans", sans-serif; fill: #fff; text-anchor: middle; }
.ico-t3 { font: bold 9px "Liberation Sans", sans-serif; fill: #fff; text-anchor: middle; }
.tray { flex: 1; min-width: 0; display: flex; align-items: center; padding-left: 9px; font: 11.500px "Open Sans", sans-serif; }
.t-net { margin-left: 7px; } .t-mon { margin-left: 8px; } .t-vol { margin-left: 6px; }
.t-eng { margin-left: 9px; width: 28px; flex: none; }
.t-clock { width: 76px; flex: none; display: flex; flex-direction: column; align-items: center; line-height: 18px; }
.t-note { margin-left: 9px; position: relative; width: 30px; height: 24px; padding-top: 3px; flex: none; }
.badge { position: absolute; left: 7px; top: 11px; width: 16px; height: 16px; border-radius: 50%; background: #22272c; border: 1px solid #9aa0a6; font: bold 10px/14px "Liberation Sans", sans-serif; text-align: center; color: #fff; }
```
